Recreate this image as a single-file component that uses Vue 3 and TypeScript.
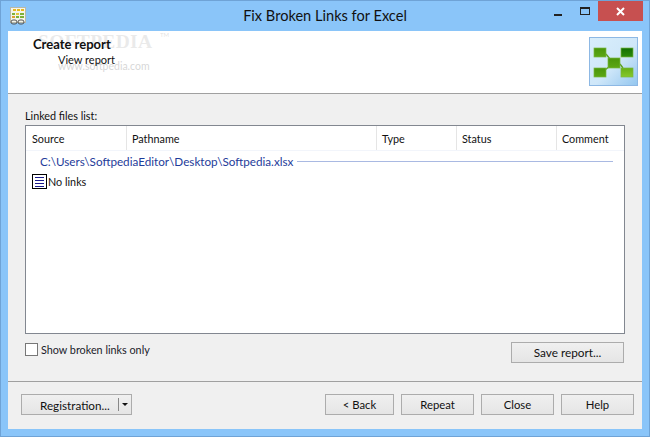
<script setup lang="ts">
const columns = [
  { label: 'Source', width: 101 },
  { label: 'Pathname', width: 250 },
  { label: 'Type', width: 80 },
  { label: 'Status', width: 100 },
  { label: 'Comment', width: 60 },
]
const nodes = [
  { x: 5, y: 11, w: 12, h: 9, fill: 'url(#n1)' },
  { x: 32, y: 11, w: 12, h: 9, fill: 'url(#n2)' },
  { x: 19, y: 21, w: 12, h: 10, fill: 'url(#n1)' },
  { x: 5, y: 31, w: 12, h: 9, fill: 'url(#n1)' },
  { x: 32, y: 31, w: 12, h: 9, fill: 'url(#n3)' },
]
const footerButtons = [
  { label: '< Back', width: 67 },
  { label: 'Repeat', width: 71 },
  { label: 'Close', width: 71 },
  { label: 'Help', width: 71 },
]
</script>

<template>
  <div class="window">
    <div class="titlebar">
      <svg class="app-icon" width="16" height="18" viewBox="0 0 16 18">
        <rect x="0.5" y="0.5" width="15" height="15" fill="#f4f4ea" stroke="#b9b9a8" />
        <rect x="3" y="2" width="3" height="2" fill="#e8b81e" />
        <rect x="7" y="2" width="3" height="2" fill="#e8b81e" />
        <rect x="11" y="2" width="3" height="2" fill="#e8b81e" />
        <rect x="2" y="6" width="3" height="2" fill="#7cb13a" />
        <rect x="6" y="6" width="3" height="2" fill="#e2c53a" />
        <rect x="10" y="6" width="4" height="2" fill="#7cb13a" />
        <rect x="2" y="9" width="3" height="2" fill="#e0a030" />
        <rect x="6" y="9" width="3" height="2" fill="#7cb13a" />
        <rect x="10" y="9" width="4" height="2" fill="#7cb13a" />
        <rect x="1" y="13" width="6" height="4" rx="2" fill="none" stroke="#555" />
        <rect x="8" y="13" width="6" height="4" rx="2" fill="none" stroke="#555" />
      </svg>
      <span class="title">Fix Broken Links for Excel</span>
      <div class="controls">
        <span class="ctl"><i class="min"></i></span>
        <span class="ctl"><i class="max"></i></span>
        <span class="close">
          <svg width="9" height="9" viewBox="0 0 9 9"><path d="M1 1l7 7M8 1l-7 7" stroke="#fff" stroke-width="2" /></svg>
        </span>
      </div>
    </div>

    <div class="client">
      <header class="head">
        <div class="steps">
          <div class="step-on">Create report</div>
          <div class="step-off">View report</div>
        </div>
        <div class="logo">
          <svg width="49" height="49" viewBox="0 0 49 49">
            <defs>
              <linearGradient id="sky" x1="0" y1="0" x2="1" y2="1">
                <stop offset="0" stop-color="#d9eefb" />
                <stop offset="0.55" stop-color="#cfe7f9" />
                <stop offset="1" stop-color="#93c6ef" />
              </linearGradient>
              <linearGradient id="n1" x1="0" y1="0" x2="0" y2="1">
                <stop offset="0" stop-color="#4a950a" />
                <stop offset="1" stop-color="#5ca714" />
              </linearGradient>
              <linearGradient id="n2" x1="0" y1="0" x2="0" y2="1">
                <stop offset="0" stop-color="#136f04" />
                <stop offset="1" stop-color="#2b8a0a" />
              </linearGradient>
              <linearGradient id="n3" x1="0" y1="0" x2="0" y2="1">
                <stop offset="0" stop-color="#66b018" />
                <stop offset="1" stop-color="#86c82c" />
              </linearGradient>
            </defs>
            <rect x="0.5" y="0.5" width="48" height="48" fill="url(#sky)" stroke="#8db8e4" />
            <path d="M17 17l4 5M31 27l3 4M21 29l-5 4" stroke="#5a9e1c" stroke-width="1.3" fill="none" />
            <rect v-for="n in nodes" :key="n.x + '-' + n.y" :x="n.x" :y="n.y" :width="n.w" :height="n.h" :fill="n.fill" stroke="#7ab840" stroke-width="0.7" />
          </svg>
        </div>
        <div class="mark">
          <span class="mark-big">SOFTPEDIA</span>
          <span class="mark-tm">TM</span>
          <span class="mark-small">www.softpedia.com</span>
        </div>
      </header>

      <main class="body">
        <div class="list-label">Linked files list:</div>
        <div class="list">
          <div class="list-head">
            <div v-for="c in columns" :key="c.label" class="col" :style="{ width: c.width + 'px' }">{{ c.label }}</div>
          </div>
          <div class="group">
            <span class="group-name">C:\Users\SoftpediaEditor\Desktop\Softpedia.xlsx</span>
            <span class="group-line"></span>
          </div>
          <div class="row">
            <svg width="15" height="15" viewBox="0 0 15 15">
              <rect x="0.5" y="0.5" width="14" height="14" fill="#fff" stroke="#000" />
              <path d="M3 3.5h9M3 6.5h9M3 9.5h9M3 12.5h9" stroke="#1c1c8c" />
            </svg>
            <span>No links</span>
          </div>
        </div>
        <div class="options">
          <label class="check"><i class="box"></i>Show broken links only</label>
          <button class="btn save">Save report...</button>
        </div>
      </main>

      <footer class="foot">
        <button class="btn reg">
          <span class="reg-text">Registration...</span>
          <span class="reg-sep"></span>
          <span class="reg-arrow"></span>
        </button>
        <div class="foot-right">
          <button v-for="b in footerButtons" :key="b.label" class="btn nav" :style="{ width: b.width + 'px' }">{{ b.label }}</button>
        </div>
      </footer>
    </div>
  </div>
</template>

<style>
html, body { margin: 0; background: #8ac5f9; }
</style>

<style scoped>
.window {
  width: 650px;
  height: 437px;
  box-sizing: border-box;
  display: flex;
  flex-direction: column;
  background: #8ac5f9;
  border: 1px solid #6fa3d6;
  padding: 0 7px 7px;
  font-family: Lato, "Open Sans", sans-serif;
  font-size: 10.8px;
  color: #111;
}
.titlebar {
  height: 30px;
  flex: none;
  display: flex;
  align-items: center;
  position: relative;
}
.app-icon { margin: 0 0 0 2px; }
.title {
  position: absolute;
  left: 0;
  right: 0;
  text-align: center;
  font-size: 14.6px;
  color: #111;
  top: 6px;
}
.controls {
  position: absolute;
  right: -1px;
  top: 0;
  display: flex;
}
.ctl {
  width: 27px;
  height: 20px;
  display: flex;
  align-items: center;
  justify-content: center;
}
.min { width: 8px; height: 2px; background: #222; margin-top: 8px; }
.max { width: 8px; height: 5px; border: 1px solid #222; border-top-width: 2px; }
.close {
  width: 45px;
  height: 20px;
  background: #c75050;
  display: flex;
  align-items: center;
  justify-content: center;
}
.client {
  flex: 1;
  display: flex;
  flex-direction: column;
  background: #f0f0f0;
  min-height: 0;
}
.head {
  height: 63px;
  flex: none;
  background: #fff;
  border-bottom: 1px solid #a0a0a0;
  box-sizing: border-box;
  display: flex;
  justify-content: space-between;
  position: relative;
}
.steps { padding: 5px 0 0 25px; line-height: 16px; }
.step-on { font-weight: 700; font-size: 13px; }
.step-off { padding: 0 0 0 25px; font-size: 11px; }
.logo { padding: 6px 4px 0 0; }
.mark {
  position: absolute;
  left: 30px;
  top: 0;
  pointer-events: none;
  color: #000;
}
.mark-big {
  position: absolute;
  top: 0;
  left: 0;
  font-size: 19.5px;
  font-family: "Liberation Serif", serif;
  font-weight: 700;
  letter-spacing: 0.3px;
  white-space: nowrap;
  opacity: 0.08;
}
.mark-tm {
  position: absolute;
  top: 0;
  left: 122px;
  font-size: 6px;
  opacity: 0.12;
}
.mark-small {
  position: absolute;
  top: 29px;
  left: 20px;
  font-size: 10.5px;
  white-space: nowrap;
  opacity: 0.16;
}
.body {
  flex: 1;
  display: flex;
  flex-direction: column;
  padding: 13px 17px 0;
  min-height: 0;
}
.list-label { height: 17px; line-height: 17px; }
.list {
  height: 207px;
  flex: none;
  margin-top: 1px;
  background: #fff;
  border: 1px solid #828790;
}
.list-head { display: flex; height: 24px; }
.col {
  box-sizing: border-box;
  padding-left: 5px;
  line-height: 26px;
  border-right: 1px solid #e5e5e5;
  flex: none;
}
.col:first-child { padding-left: 6px; }
.col:last-child { border-right: none; }
.group {
  display: flex;
  align-items: center;
  height: 20px;
  padding: 0 11px 0 14px;
  border-top: 1px solid #f2f5fb;
}
.group-name { color: #1e3c9a; font-size: 11.7px; }
.group-line { flex: 1; height: 1px; background: #a9b9e2; margin-left: 4px; }
.row {
  display: flex;
  align-items: center;
  gap: 1px;
  padding: 1px 0 0 6px;
  height: 19px;
}
.options {
  display: flex;
  justify-content: space-between;
  align-items: center;
  height: 22px;
  margin-top: 7px;
}
.check { display: flex; align-items: center; gap: 3px; margin-top: -6px; color: #1a1a2a; }
.box {
  width: 11px;
  height: 11px;
  border: 1px solid #777;
  background: #fff;
  display: block;
}
.btn {
  font: inherit;
  font-size: 11.3px;
  color: #111;
  height: 19px;
  padding: 0;
  border: 1px solid #acacac;
  background: linear-gradient(#f0f0f0, #e5e5e5);
  display: block;
  box-sizing: content-box;
}
.save { width: 111px; margin-right: 1px; font-size: 11.8px; }
.foot {
  height: 48px;
  flex: none;
  margin-top: 17px;
  border-top: 1px solid #a0a0a0;
  display: flex;
  justify-content: space-between;
  padding: 12px 8px 0 13px;
  box-sizing: border-box;
}
.foot .reg {
  display: flex;
  align-items: center;
  padding-left: 18px;
  width: 91px;
  font-size: 11.7px;
}
.reg-text { flex: 1; text-align: left; }
.reg-sep { width: 1px; height: 13px; background: #888; margin-right: 3px; }
.reg-arrow {
  width: 0;
  height: 0;
  border: 3px solid transparent;
  border-top: 3px solid #111;
  border-bottom: 0;
  margin-right: 3px;
}
.foot-right { display: flex; gap: 7px; }
</style>
